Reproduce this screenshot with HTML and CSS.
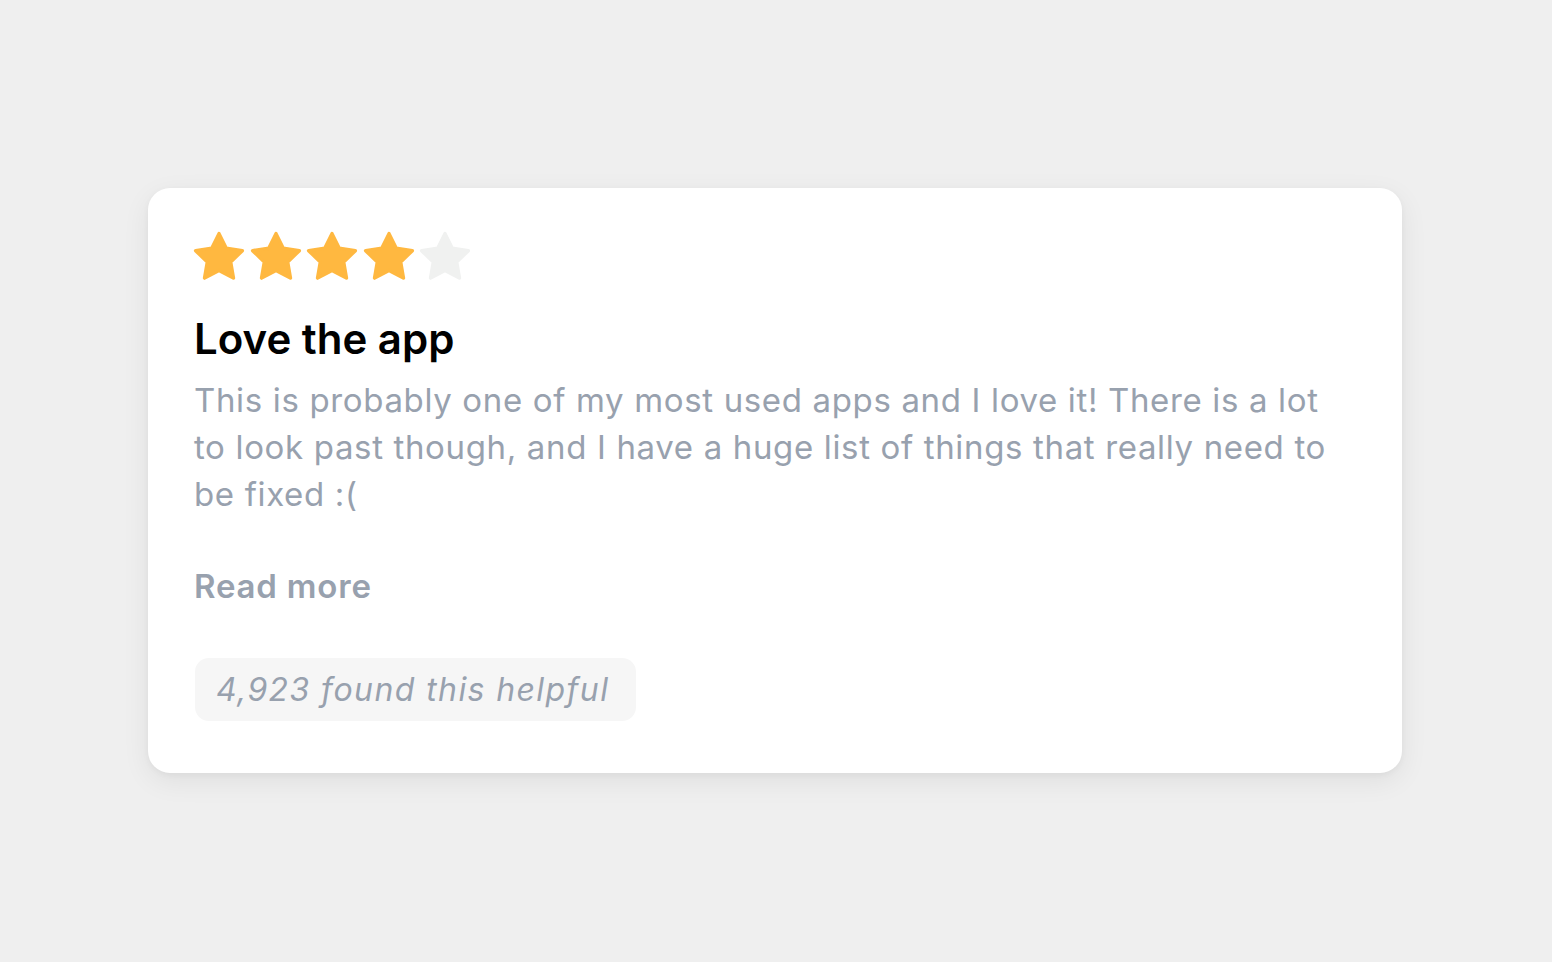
FILE: index.html
```html
<!DOCTYPE html>
<html lang="en">
<head>
<meta charset="utf-8">
<link rel="stylesheet" href="styles.css">
</head>
<body>
<main class="page">
  <article class="card">
    <div class="stars">
      <svg class="star on" viewBox="0 0 24 24"><path d="M12 2l3.09 6.26L22 9.27l-5 4.87 1.18 6.88L12 17.77l-6.18 3.25L7 14.14 2 9.27l6.91-1.01L12 2z"/></svg>
      <svg class="star on" viewBox="0 0 24 24"><path d="M12 2l3.09 6.26L22 9.27l-5 4.87 1.18 6.88L12 17.77l-6.18 3.25L7 14.14 2 9.27l6.91-1.01L12 2z"/></svg>
      <svg class="star on" viewBox="0 0 24 24"><path d="M12 2l3.09 6.26L22 9.27l-5 4.87 1.18 6.88L12 17.77l-6.18 3.25L7 14.14 2 9.27l6.91-1.01L12 2z"/></svg>
      <svg class="star on" viewBox="0 0 24 24"><path d="M12 2l3.09 6.26L22 9.27l-5 4.87 1.18 6.88L12 17.77l-6.18 3.25L7 14.14 2 9.27l6.91-1.01L12 2z"/></svg>
      <svg class="star off" viewBox="0 0 24 24"><path d="M12 2l3.09 6.26L22 9.27l-5 4.87 1.18 6.88L12 17.77l-6.18 3.25L7 14.14 2 9.27l6.91-1.01L12 2z"/></svg>
    </div>
    <h2 class="title">Love the app</h2>
    <p class="body">This is probably one of my most used apps and I love it! There is a lot to look past though, and I have a huge list of things that really need to be fixed :(</p>
    <a class="more" href="#">Read more</a>
    <div class="helpful">4,923 found this helpful</div>
  </article>
</main>
</body>
</html>
```

FILE: styles.css
```css
* { box-sizing: border-box; }
html, body { margin: 0; padding: 0; }
body {
  background: #efefef;
  font-family: Inter, "Noto Sans", sans-serif;
  width: 1552px;
  height: 962px;
}
.page {
  padding: 188px 150px 0 148px;
}
.card {
  width: 1254px;
  height: 585px;
  background: #fff;
  border-radius: 22px;
  box-shadow: 0 8px 28px rgba(0, 0, 0, 0.07), 0 2px 6px rgba(0, 0, 0, 0.04);
  padding: 41px 46px 0 46px;
  display: flex;
  flex-direction: column;
  align-items: flex-start;
}
.stars {
  display: flex;
  margin-left: -3px;
  gap: 0.5px;
}
.star {
  width: 56px;
  height: 56px;
  display: block;
}
.star path { stroke-width: 1.5; stroke-linejoin: round; }
.star.on path { fill: #ffb840; stroke: #ffb840; }
.star.off path { fill: #f0f1f0; stroke: #f0f1f0; }
.title {
  margin: 29px 0 0 0;
  font-size: 42px;
  line-height: 50px;
  font-weight: 600;
  color: #000;
  letter-spacing: 0;
}
.body {
  margin: 13px 0 0 0;
  font-size: 33px;
  line-height: 47px;
  color: #98a1ae;
  font-weight: 400;
  letter-spacing: 0.65px;
}
.more {
  margin-top: 48px;
  font-size: 33px;
  line-height: 40px;
  font-weight: 600;
  color: #98a1ae;
  text-decoration: none;
  letter-spacing: 0.8px;
}
.helpful {
  margin-top: 52px;
  margin-left: 1px;
  height: 63px;
  padding: 0 27px 0 21px;
  display: flex;
  align-items: center;
  background: #f6f6f6;
  border-radius: 14px;
  font-size: 32px;
  font-style: italic;
  color: #98a1ae;
  letter-spacing: 1.4px;
}
```
